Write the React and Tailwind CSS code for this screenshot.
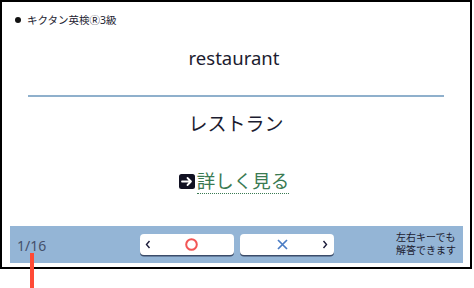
const ArrowBox = () => (
  <svg width="16" height="15" viewBox="0 0 16 15" className="shrink-0">
    <rect x="0" y="0" width="16" height="15" rx="2.5" fill="#111122" />
    <path d="M3 7.5h9M8.5 4l3.5 3.5L8.5 11" stroke="#fff" strokeWidth="1.8" fill="none" strokeLinecap="round" strokeLinejoin="round" />
  </svg>
);

const Chevron = ({ dir }) => (
  <svg width="6" height="9" viewBox="0 0 6 9">
    <path d={dir === "left" ? "M4.5 1L1.5 4.5l3 3.5" : "M1.5 1l3 3.5-3 3.5"} stroke="#1c1c3a" strokeWidth="1.4" fill="none" />
  </svg>
);

const Circle = () => (
  <svg width="13" height="13" viewBox="0 0 13 13">
    <circle cx="6.5" cy="6.5" r="5.3" stroke="#f25555" strokeWidth="2" fill="none" />
  </svg>
);

const Cross = () => (
  <svg width="11" height="11" viewBox="0 0 11 11">
    <path d="M1 1l9 9M10 1l-9 9" stroke="#4a7cc4" strokeWidth="1.7" fill="none" />
  </svg>
);

const App = () => {
  return (
    <div className="relative w-[474px] h-[288px] bg-white font-['Noto_Sans','Noto_Sans_CJK_JP',sans-serif] text-[#1c1c30]">
      <div className="w-[472px] h-[269px] border-2 border-black flex flex-col">
        {/* title */}
        <div className="mt-[10px] pl-[13px] flex items-center gap-[6px] h-[16px] text-[10.5px] leading-none">
          <span className="w-[6px] h-[6px] rounded-full bg-[#111]" />
          <span>キクタン英検Ⓡ3級</span>
        </div>

        <div className="mt-[18px] h-[24px] text-center text-[18.5px] leading-[24px] pr-[4px]">restaurant</div>

        <div className="mt-[25px] mx-[26px] h-[1.5px] bg-[#8fb0cc]" />

        <div className="mt-[13px] h-[28px] text-center text-[19px] leading-[28px]">レストラン</div>

        <div className="mt-[32px] h-[24px] flex justify-center">
          <div className="flex items-center gap-[2px] pr-[4px]">
            <ArrowBox />
            <span className="text-[18.5px] leading-[24px] text-[#3a7a52] border-b border-dotted border-[#3a7a52]">詳しく見る</span>
          </div>
        </div>

        {/* bottom bar */}
        <div className="mt-[32px] ml-[8px] mr-[7px] h-[37px] bg-[#94b5d6] flex items-center relative">
          <span className="pl-[7px] pt-[3px] text-[14px] text-[#44506a] w-[40px]">1/16</span>
          <div className="absolute left-[130px] top-[8px] flex gap-[6px]">
            <button className="w-[94px] h-[21px] bg-white rounded-[4px] shadow-[0_1.5px_0_#3c4d6a] flex items-center pl-[5px]">
              <Chevron dir="left" />
              <span className="flex-1 flex justify-center pr-[2px]"><Circle /></span>
            </button>
            <button className="w-[94px] h-[21px] bg-white rounded-[4px] shadow-[0_1.5px_0_#3c4d6a] flex items-center pr-[6px]">
              <span className="flex-1 flex justify-center pl-[2px]"><Cross /></span>
              <Chevron dir="right" />
            </button>
          </div>
          <div className="ml-auto pr-[7px] text-[10px] leading-[13px] text-[#1c1c30]">
            <div>左右キーでも</div>
            <div>解答できます</div>
          </div>
        </div>
      </div>

      {/* marker */}
      <div className="absolute left-[30px] top-[253px] w-[4px] h-[35px] bg-[#ff4a36]" />
    </div>
  );
};

export default App;
